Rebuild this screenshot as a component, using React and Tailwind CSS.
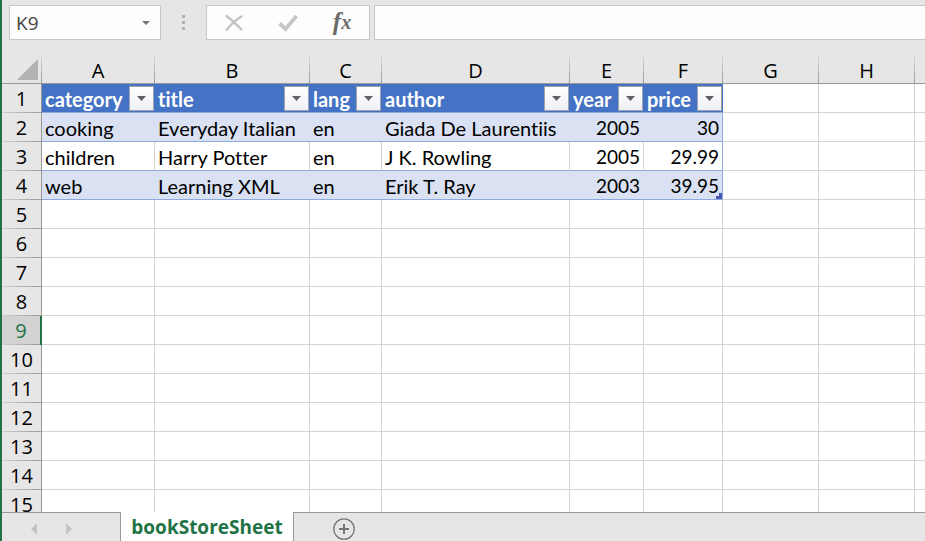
import React from "react";

const columns = ["A", "B", "C", "D", "E", "F", "G", "H", ""];

const columnWidths = [
  "w-[113px]",
  "w-[155px]",
  "w-[72px]",
  "w-[188px]",
  "w-[74px]",
  "w-[79px]",
  "w-[96px]",
  "w-[96px]",
  "",
];

const fields = ["category", "title", "lang", "author", "year", "price"];

const books = [
  ["cooking", "Everyday Italian", "en", "Giada De Laurentiis", "2005", "30"],
  ["children", "Harry Potter", "en", "J K. Rowling", "2005", "29.99"],
  ["web", "Learning XML", "en", "Erik T. Ray", "2003", "39.95"],
];

const rowNumbers = Array.from({ length: 15 }, (_, i) => i + 1);
const activeRow = 9;

function FilterButton({ field }) {
  return (
    <button
      type="button"
      aria-label={`Filter ${field}`}
      className="flex size-[25px] shrink-0 items-center justify-center border border-[#a0a4aa] bg-linear-to-b from-white to-[#eef0f5]"
    >
      <svg width="9" height="5" viewBox="0 0 9 5" aria-hidden="true">
        <path d="M0 0h9L4.5 5z" fill="#606060" />
      </svg>
    </button>
  );
}

function FormulaBar() {
  return (
    <header className="flex h-[55px] shrink-0 items-start pt-[5px] pl-[7px]">
      <div className="flex h-[35px] w-[152px] shrink-0 items-center border border-[#c6c6c6] bg-[#fdfdfd]">
        <input
          aria-label="Name box"
          defaultValue="K9"
          className="h-full min-w-0 flex-1 bg-transparent pl-1.5 font-['Open_Sans',sans-serif] text-[19px] text-[#444] outline-none"
        />
        <button type="button" aria-label="Show names" className="flex h-full w-7 items-center justify-center">
          <svg width="8" height="4" viewBox="0 0 8 4" aria-hidden="true">
            <path d="M0 0h8L4 4z" fill="#777" />
          </svg>
        </button>
      </div>
      <div className="flex h-[35px] w-[45px] shrink-0 flex-col items-center justify-center gap-[3px]">
        <span className="size-[3px] bg-[#b0b0b0]" />
        <span className="size-[3px] bg-[#b0b0b0]" />
        <span className="size-[3px] bg-[#b0b0b0]" />
      </div>
      <div className="flex h-[35px] w-[164px] shrink-0 items-center border border-[#c6c6c6] bg-[#fdfdfd]">
        <button type="button" aria-label="Cancel" className="flex h-full flex-1 items-center justify-center">
          <svg width="18" height="18" viewBox="0 0 18 18" fill="none" aria-hidden="true">
            <path d="M1.5 2C7 6 12 11 16.5 15.5" stroke="#c3c3c3" strokeWidth="2.4" strokeLinecap="round" />
            <path d="M16.5 2.5C11 6 5 11.5 1.5 16" stroke="#c3c3c3" strokeWidth="2.2" strokeLinecap="round" />
          </svg>
        </button>
        <button type="button" aria-label="Enter" className="flex h-full flex-1 items-center justify-center">
          <svg width="20" height="18" viewBox="0 0 20 18" fill="none" aria-hidden="true">
            <path d="M1.5 9.5L7.5 15L18.5 2" stroke="#c6c6c6" strokeWidth="3.8" />
          </svg>
        </button>
        <button
          type="button"
          aria-label="Insert function"
          className="flex h-full flex-1 items-center justify-center pb-0.5 font-['Liberation_Serif',serif] text-[#6a6a6a] italic"
        >
          <span className="text-[25px] leading-6 font-bold">f</span>
          <span className="text-[20px] leading-6 font-bold">x</span>
        </button>
      </div>
      <input
        aria-label="Formula"
        className="ml-1 h-[35px] min-w-0 flex-1 border border-r-0 border-[#c6c6c6] bg-[#fdfdfd] px-2 text-[19px] outline-none"
      />
    </header>
  );
}

function ColumnHeading({ name }) {
  return (
    <th scope="col" className="h-[29px] border-b border-[#999] p-0 font-normal">
      <div className="flex h-7 items-stretch">
        <span className="flex-1 pt-[2px] text-center leading-7">{name}</span>
        {name && <span className="w-px bg-linear-to-b from-[#dcdcdc] to-[#999]" />}
      </div>
    </th>
  );
}

function RowHeading({ number }) {
  const active = number === activeRow;
  return (
    <th
      scope="row"
      className={
        active
          ? "h-[29px] border-r-2 border-[#217346] bg-[#d2d2d2] p-0 font-normal text-[#217346]"
          : "h-[29px] border-r border-[#999] bg-[#e6e6e6] p-0 font-normal"
      }
    >
      <div className="flex h-[29px] flex-col">
        <span className="h-7 pt-px text-center leading-7">{number}</span>
        <span className="h-px bg-linear-to-r from-[#d0d0d0] to-[#999]" />
      </div>
    </th>
  );
}

function HeaderCell({ field }) {
  return (
    <td className="border-b border-[#8ea9db] bg-[#4472c4] p-0 font-bold text-white">
      <div className="flex h-7 items-center justify-between pr-px pl-[3px]">
        <span className="pt-px leading-7">{field}</span>
        <FilterButton field={field} />
      </div>
    </td>
  );
}

function DataCell({ value, column, banded, last }) {
  const numeric = column > 3;
  const fill = banded ? "bg-[#d9e1f2]" : "bg-white";
  const edge =
    column === 5
      ? "border-r border-r-[#8ea9db] pr-0"
      : banded
        ? "pr-px"
        : "border-r border-r-[#d4d4d4] pr-0";
  return (
    <td className={`relative border-b border-b-[#8ea9db] py-0 pl-0 ${fill} ${edge}`}>
      <div
        className={`h-7 px-[3px] pt-px leading-7 whitespace-nowrap ${numeric ? "text-right text-[19px]" : "text-left"}`}
      >
        {value}
      </div>
      {last && (
        <svg className="absolute right-0 bottom-0" width="6" height="6" viewBox="0 0 6 6" aria-hidden="true">
          <path d="M3 0h3v6H0V3h3z" fill="#4759b0" />
        </svg>
      )}
    </td>
  );
}

function Sheet() {
  return (
    <main className="min-h-0 flex-1 overflow-hidden">
      <table className="w-full table-fixed border-separate border-spacing-0 font-['Open_Sans',sans-serif] text-[20px] text-black [font-variant-ligatures:none]">
        <colgroup>
          <col className="w-10" />
          {columnWidths.map((width, i) => (
            <col key={i} className={width} />
          ))}
        </colgroup>
        <thead>
          <tr>
            <td className="border-b border-[#999] p-0">
              <div className="flex h-7 items-stretch justify-end">
                <button type="button" aria-label="Select all" className="flex items-end pr-[3px] pb-[3px]">
                  <svg width="21" height="21" viewBox="0 0 21 21" aria-hidden="true">
                    <path d="M21 0v21H0z" fill="#b2b2b2" />
                  </svg>
                </button>
                <span className="w-px bg-linear-to-b from-[#dcdcdc] to-[#999]" />
              </div>
            </td>
            {columns.map((name, i) => (
              <ColumnHeading key={i} name={name} />
            ))}
          </tr>
        </thead>
        <tbody>
          {rowNumbers.map((number) => (
            <tr key={number}>
              <RowHeading number={number} />
              {columns.map((_, c) => {
                if (c < 6 && number === 1) return <HeaderCell key={c} field={fields[c]} />;
                if (c < 6 && number <= 4)
                  return (
                    <DataCell
                      key={c}
                      value={books[number - 2][c]}
                      column={c}
                      banded={number % 2 === 0}
                      last={number === 4 && c === 5}
                    />
                  );
                return (
                  <td key={c} className="border-r border-b border-[#d4d4d4] bg-white p-0 last:border-r-0" />
                );
              })}
            </tr>
          ))}
        </tbody>
      </table>
    </main>
  );
}

function SheetTabs() {
  return (
    <footer className="flex h-[29px] shrink-0">
      <div className="flex w-[119px] shrink-0 items-center gap-[29px] border-t border-r border-[#999] pt-1 pl-[29px]">
        <button type="button" aria-label="Previous sheet">
          <svg width="6" height="12" viewBox="0 0 6 12" aria-hidden="true">
            <path d="M6 0v12L0 6z" fill="#c3c3c3" />
          </svg>
        </button>
        <button type="button" aria-label="Next sheet">
          <svg width="6" height="12" viewBox="0 0 6 12" aria-hidden="true">
            <path d="M0 0v12l6-6z" fill="#c3c3c3" />
          </svg>
        </button>
      </div>
      <button
        type="button"
        className="w-[172px] shrink-0 bg-white text-center font-['Open_Sans',sans-serif] text-[19px] leading-7 font-bold text-[#217346]"
      >
        bookStoreSheet
      </button>
      <div className="flex flex-1 items-center border-t border-l border-[#999] pt-1 pl-[39px]">
        <button type="button" aria-label="New sheet">
          <svg width="22" height="22" viewBox="0 0 22 22" fill="none" stroke="#777" aria-hidden="true">
            <circle cx="11" cy="11" r="10.2" strokeWidth="1.3" />
            <path d="M11 6v10M6 11h10" strokeWidth="2" />
          </svg>
        </button>
      </div>
    </footer>
  );
}

export default function App() {
  return (
    <div className="flex h-screen w-full flex-col overflow-hidden border-l-2 border-[#217346] bg-[#e6e6e6] [&_td]:font-[Lato,sans-serif]">
      <FormulaBar />
      <Sheet />
      <SheetTabs />
    </div>
  );
}
